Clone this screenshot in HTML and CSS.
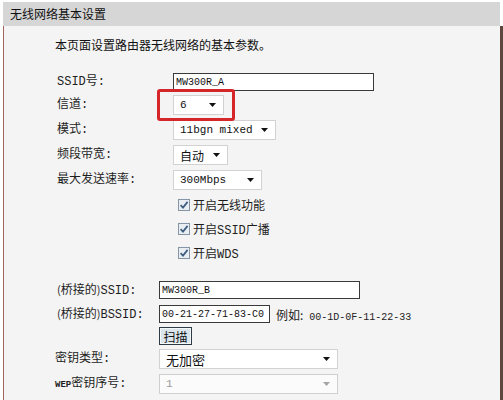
FILE: index.html
```
<!DOCTYPE html>
<html lang="zh-CN">
<head>
<meta charset="utf-8">
<title>无线网络基本设置</title>
<link rel="stylesheet" href="styles.css">
</head>
<body>
<div class="panel">
  <div class="header">无线网络基本设置</div>
  <div class="content">
    <p class="intro">本页面设置路由器无线网络的基本参数。</p>

    <div class="form form-a">
      <div class="row r-first">
        <span class="label">SSID号:</span>
        <span class="input w-ssid">MW300R_A</span>
      </div>
      <div class="row r-3">
        <span class="label">信道:</span>
        <span class="mark">
          <span class="select w-ch">6<svg class="arrow" width="7" height="4" viewBox="0 0 7 4"><path d="M0 0h7L3.5 4z"/></svg></span>
          <span class="redbox"></span>
        </span>
      </div>
      <div class="row">
        <span class="label">模式:</span>
        <span class="select w-mode">11bgn mixed<svg class="arrow" width="7" height="4" viewBox="0 0 7 4"><path d="M0 0h7L3.5 4z"/></svg></span>
      </div>
      <div class="row">
        <span class="label">频段带宽:</span>
        <span class="select w-bw"><span class="cjk">自动</span><svg class="arrow" width="7" height="4" viewBox="0 0 7 4"><path d="M0 0h7L3.5 4z"/></svg></span>
      </div>
      <div class="row">
        <span class="label">最大发送速率:</span>
        <span class="select w-rate">300Mbps<svg class="arrow" width="7" height="4" viewBox="0 0 7 4"><path d="M0 0h7L3.5 4z"/></svg></span>
      </div>
      <div class="row">
        <span class="label"></span>
        <span class="check"><svg width="12" height="12" viewBox="0 0 12 12"><rect x="0.5" y="0.5" width="11" height="11" fill="#e9eef3" stroke="#8595a5"/><path d="M2.6 6.1L5 8.6L9.6 2.9" fill="none" stroke="#3d5d80" stroke-width="1.7"/></svg>开启无线功能</span>
      </div>
      <div class="row r-4">
        <span class="label"></span>
        <span class="check"><svg width="12" height="12" viewBox="0 0 12 12"><rect x="0.5" y="0.5" width="11" height="11" fill="#e9eef3" stroke="#8595a5"/><path d="M2.6 6.1L5 8.6L9.6 2.9" fill="none" stroke="#3d5d80" stroke-width="1.7"/></svg>开启SSID广播</span>
      </div>
      <div class="row r-4">
        <span class="label"></span>
        <span class="check"><svg width="12" height="12" viewBox="0 0 12 12"><rect x="0.5" y="0.5" width="11" height="11" fill="#e9eef3" stroke="#8595a5"/><path d="M2.6 6.1L5 8.6L9.6 2.9" fill="none" stroke="#3d5d80" stroke-width="1.7"/></svg>开启WDS</span>
      </div>
    </div>

    <div class="form form-b">
      <div class="row r-bridge">
        <span class="label"><span class="paren">(</span>桥接的<span class="paren">)</span>SSID:</span>
        <span class="input w-bssid-name">MW300R_B</span>
      </div>
      <div class="row r-4">
        <span class="label"><span class="paren">(</span>桥接的<span class="paren">)</span>BSSID:</span>
        <span class="input w-mac">00-21-27-71-83-C0</span>
        <span class="hint"><span class="cjk">例如:</span> 00-1D-0F-11-22-33</span>
      </div>
      <div class="row r-2">
        <span class="label"></span>
        <span class="button">扫描</span>
      </div>
      <div class="row r-3">
        <span class="label lab-key">密钥类型:</span>
        <span class="select w-key"><span class="cjk-lg">无加密</span><svg class="arrow" width="7" height="4" viewBox="0 0 7 4"><path d="M0 0h7L3.5 4z"/></svg></span>
      </div>
      <div class="row">
        <span class="label lab-key"><span class="small-caps">WEP</span>密钥序号:</span>
        <span class="select w-key disabled">1<svg class="arrow" width="7" height="4" viewBox="0 0 7 4"><path d="M0 0h7L3.5 4z"/></svg></span>
      </div>
    </div>
  </div>
</div>
</body>
</html>
```
FILE: styles.css
```
html, body {
  margin: 0;
  padding: 0;
  background: #ffffff;
}
body {
  width: 503px;
  height: 400px;
  overflow: hidden;
  font-family: "Liberation Mono", "Noto Sans CJK SC", monospace;
  font-size: 12px;
  color: #1e1e1e;
}
.panel {
  margin: 2px 0 0 3px;
}
.header {
  height: 24px;
  line-height: 24px;
  padding-left: 7px;
  margin-right: 3px;
  background: #d6d6d6;
  font-family: "Noto Sans CJK SC", sans-serif;
  font-size: 12px;
  color: #111;
}
.content {
  height: 374px;
  box-sizing: border-box;
  background: #f4f4f4;
  border-left: 1px solid #a5675d;
  border-right: 3px solid #5f463e;
  padding: 11px 0 0 51px;
}
.intro {
  margin: 0;
  height: 16px;
  line-height: 16px;
  font-family: "Noto Sans CJK SC", sans-serif;
  font-size: 12px;
  color: #111;
}
.form {
  display: flex;
  flex-direction: column;
}
.form-a {
  margin-top: 19px;
}
.form-a .label {
  width: 118px;
}
.form-b .label {
  width: 104px;
}
.row {
  display: flex;
  align-items: center;
  height: 20px;
  margin-top: 5px;
}
.row.r-first { margin-top: 0; }
.row.r-2 { margin-top: 2px; }
.row.r-3 { margin-top: 3px; }
.row.r-4 { margin-top: 4px; }
.row.r-bridge { margin-top: 17px; }
.label {
  flex: none;
  padding-left: 2px;
  box-sizing: border-box;
  white-space: nowrap;
  line-height: 20px;
}
.label.lab-key {
  padding-left: 0;
}
.paren {
  font-family: "Noto Sans CJK SC", sans-serif;
  font-size: 11px;
}
.small-caps {
  font-family: "Liberation Mono", monospace;
  font-size: 9px;
  font-weight: bold;
}
.input {
  display: flex;
  align-items: center;
  box-sizing: border-box;
  height: 18px;
  border: 1px solid #3a3a3a;
  background: #fff;
  padding-left: 2px;
  font-family: "Liberation Mono", monospace;
  font-size: 10px;
  color: #111;
}
.w-ssid { width: 201px; }
.w-bssid-name { width: 201px; }
.w-mac { width: 111px; }
.hint {
  margin-left: 6px;
  font-family: "Liberation Mono", monospace;
  font-size: 10px;
  color: #222;
}
.hint .cjk {
  font-family: "Noto Sans CJK SC", sans-serif;
  font-size: 12px;
}
.select {
  display: flex;
  align-items: center;
  justify-content: space-between;
  box-sizing: border-box;
  height: 20px;
  padding: 0 7px 0 6px;
  border: 1px solid #d2d2d2;
  background: #fff;
  font-family: "Liberation Mono", monospace;
  font-size: 11px;
  color: #111;
}
.select .arrow {
  flex: none;
  fill: #111;
}
.select.disabled {
  color: #9a9a9a;
  border-color: #cfcfcf;
  background: #fbfbfb;
}
.select.disabled .arrow {
  fill: #a5a5a5;
}
.cjk {
  font-family: "Noto Sans CJK SC", sans-serif;
  font-size: 12px;
}
.cjk-lg {
  font-family: "Noto Sans CJK SC", sans-serif;
  font-size: 13px;
}
.w-ch { width: 51px; }
.w-mode { width: 103px; }
.w-bw { width: 55px; }
.w-rate { width: 89px; }
.w-key { width: 179px; }
.mark {
  position: relative;
  display: flex;
}
.redbox {
  position: absolute;
  left: -16px;
  top: -6px;
  width: 78px;
  height: 32px;
  box-sizing: border-box;
  border: 3px solid #d5262a;
  border-radius: 3px;
}
.check {
  display: flex;
  align-items: center;
  gap: 3px;
  margin-left: 5px;
  font-family: "Liberation Mono", "Noto Sans CJK SC", monospace;
  font-size: 12px;
}
.check svg {
  flex: none;
}
.button {
  display: flex;
  align-items: center;
  justify-content: center;
  box-sizing: border-box;
  width: 33px;
  height: 18px;
  border: 1px solid #2e3a44;
  box-shadow: inset 0 0 0 1px #f4f8fb;
  background: #dbe5ec;
  font-family: "Noto Sans CJK SC", sans-serif;
  font-size: 12px;
  color: #111;
}
```
